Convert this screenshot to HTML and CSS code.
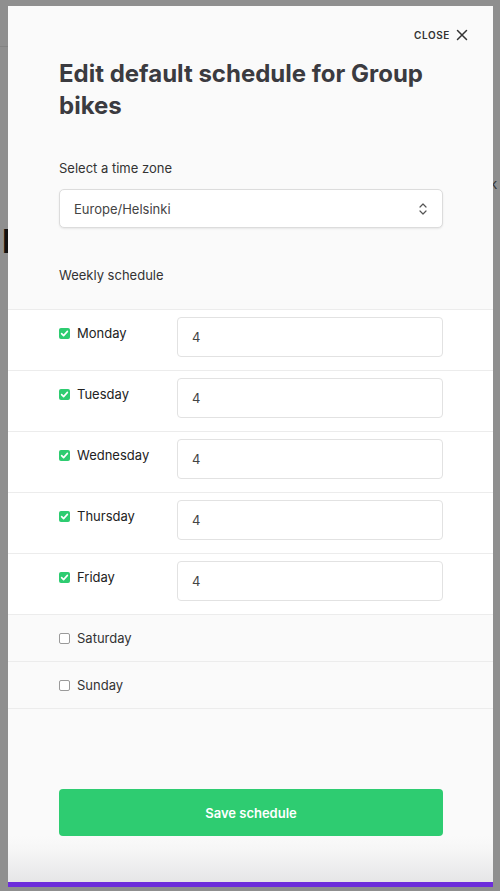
FILE: index.html
```html
<!DOCTYPE html>
<html>
<head>
<meta charset="utf-8">
<link rel="stylesheet" href="styles.css">
</head>
<body>
<div class="page">
  <div class="page-header"></div>
  <div class="page-glyph-left">I</div>
  <div class="page-glyph-right">k</div>
</div>
<div class="modal">
  <div class="modal-top">
    <button class="close">CLOSE
      <svg width="12" height="12" viewBox="0 0 12 12"><path d="M1.5 1.5L10.5 10.5M10.5 1.5L1.5 10.5" stroke="#333" stroke-width="1.5" stroke-linecap="round"/></svg>
    </button>
  </div>
  <h1 class="title">Edit default schedule for Group bikes</h1>
  <div class="label">Select a time zone</div>
  <div class="select">
    <span>Europe/Helsinki</span>
    <svg width="10" height="14" viewBox="0 0 10 14"><path d="M2 5L5 2L8 5M2 9L5 12L8 9" stroke="#555" stroke-width="1.2" fill="none" stroke-linecap="round" stroke-linejoin="round"/></svg>
  </div>
  <div class="label weekly">Weekly schedule</div>
  <div class="days">
    <div class="day on"><label class="day-name"><span class="cb"><svg width="11" height="11" viewBox="0 0 11 11"><path d="M2.6 5.6L4.6 7.6L8.4 3.4" stroke="#fff" stroke-width="1.6" fill="none" stroke-linecap="round" stroke-linejoin="round"/></svg></span>Monday</label><div class="input">4</div></div>
    <div class="day on"><label class="day-name"><span class="cb"><svg width="11" height="11" viewBox="0 0 11 11"><path d="M2.6 5.6L4.6 7.6L8.4 3.4" stroke="#fff" stroke-width="1.6" fill="none" stroke-linecap="round" stroke-linejoin="round"/></svg></span>Tuesday</label><div class="input">4</div></div>
    <div class="day on"><label class="day-name"><span class="cb"><svg width="11" height="11" viewBox="0 0 11 11"><path d="M2.6 5.6L4.6 7.6L8.4 3.4" stroke="#fff" stroke-width="1.6" fill="none" stroke-linecap="round" stroke-linejoin="round"/></svg></span>Wednesday</label><div class="input">4</div></div>
    <div class="day on"><label class="day-name"><span class="cb"><svg width="11" height="11" viewBox="0 0 11 11"><path d="M2.6 5.6L4.6 7.6L8.4 3.4" stroke="#fff" stroke-width="1.6" fill="none" stroke-linecap="round" stroke-linejoin="round"/></svg></span>Thursday</label><div class="input">4</div></div>
    <div class="day on"><label class="day-name"><span class="cb"><svg width="11" height="11" viewBox="0 0 11 11"><path d="M2.6 5.6L4.6 7.6L8.4 3.4" stroke="#fff" stroke-width="1.6" fill="none" stroke-linecap="round" stroke-linejoin="round"/></svg></span>Friday</label><div class="input">4</div></div>
    <div class="day off"><label class="day-name"><span class="cb"></span>Saturday</label></div>
    <div class="day off"><label class="day-name"><span class="cb"></span>Sunday</label></div>
  </div>
  <div class="spacer"></div>
  <button class="save">Save schedule</button>
  <div class="fade"></div>
  <div class="bar"></div>
</div>
</body>
</html>
```
FILE: styles.css
```css
html, body {
  margin: 0;
  padding: 0;
}
body {
  width: 500px;
  height: 891px;
  background: #8f8f8f;
  font-family: Inter, "Noto Sans", sans-serif;
  overflow: hidden;
  position: relative;
}
.page-header {
  position: absolute;
  left: 0;
  top: 46px;
  width: 8px;
  height: 1px;
  background: #838383;
}
.page-glyph-left {
  position: absolute;
  left: 2px;
  top: 222px;
  font-size: 32px;
  font-weight: 700;
  color: #111;
  line-height: 40px;
}
.page-glyph-right {
  position: absolute;
  left: 490px;
  top: 174px;
  font-size: 13px;
  color: #333;
  line-height: 20px;
}
.modal {
  position: absolute;
  left: 8px;
  top: 6px;
  width: 485px;
  height: 881px;
  background: #fafafa;
  display: flex;
  flex-direction: column;
  box-sizing: border-box;
}
.modal-top {
  display: flex;
  justify-content: flex-end;
  padding: 22px 25px 0 0;
  height: 36px;
  box-sizing: border-box;
}
.close {
  border: none;
  background: none;
  padding: 0;
  display: flex;
  align-items: center;
  gap: 6px;
  font-family: inherit;
  font-size: 10px;
  font-weight: 600;
  letter-spacing: 0.6px;
  color: #333;
}
.title {
  margin: 16px 50px 0 51px;
  font-size: 24px;
  line-height: 32px;
  font-weight: 700;
  color: #3b3b40;
}
.label {
  margin: 36px 51px 0;
  font-size: 13px;
  line-height: 20px;
  color: #333;
}
.select {
  margin: 11px 50px 0 51px;
  height: 39px;
  box-sizing: border-box;
  background: #fff;
  border: 1px solid #dcdcdc;
  border-radius: 5px;
  box-shadow: 0 1px 2px rgba(0,0,0,0.08);
  display: flex;
  align-items: center;
  justify-content: space-between;
  padding: 0 14px 0 14px;
  font-size: 13px;
  color: #444;
}
.weekly {
  margin-top: 37px;
}
.days {
  margin-top: 24px;
  border-top: 1px solid #ececec;
}
.day {
  display: flex;
  border-bottom: 1px solid #ececec;
  padding: 0 50px 0 51px;
}
.day.on {
  background: #fff;
  padding-top: 7px;
  padding-bottom: 13px;
  align-items: flex-start;
}
.day.off {
  height: 47px;
  box-sizing: border-box;
  align-items: center;
}
.day-name {
  width: 118px;
  display: flex;
  align-items: center;
  gap: 7px;
  font-size: 13px;
  line-height: 20px;
  color: #222;
}
.day.on .day-name {
  margin-top: 6px;
}
.day.off .day-name {
  color: #333;
}
.cb {
  width: 11px;
  height: 11px;
  border-radius: 2px;
  box-sizing: border-box;
  display: flex;
}
.day.on .cb {
  background: #2ecc71;
}
.day.off .cb {
  border: 1px solid #9a9a9a;
  background: #fff;
}
.input {
  flex: 1;
  height: 40px;
  box-sizing: border-box;
  border: 1px solid #e2e2e2;
  border-radius: 4px;
  background: #fff;
  display: flex;
  align-items: center;
  padding-left: 14px;
  font-size: 13px;
  color: #444;
}
.spacer {
  flex: 1;
}
.save {
  margin: 0 50px 0 51px;
  height: 47px;
  border: none;
  border-radius: 4px;
  background: #2ecc71;
  color: #fff;
  font-family: inherit;
  font-size: 13px;
  font-weight: 600;
}
.fade {
  height: 46px;
  background: linear-gradient(#fafafa 0%, #f6f6f6 30%, #e6e6e7 100%);
}
.bar {
  height: 5px;
  background: #6d2ddb;
}
```
